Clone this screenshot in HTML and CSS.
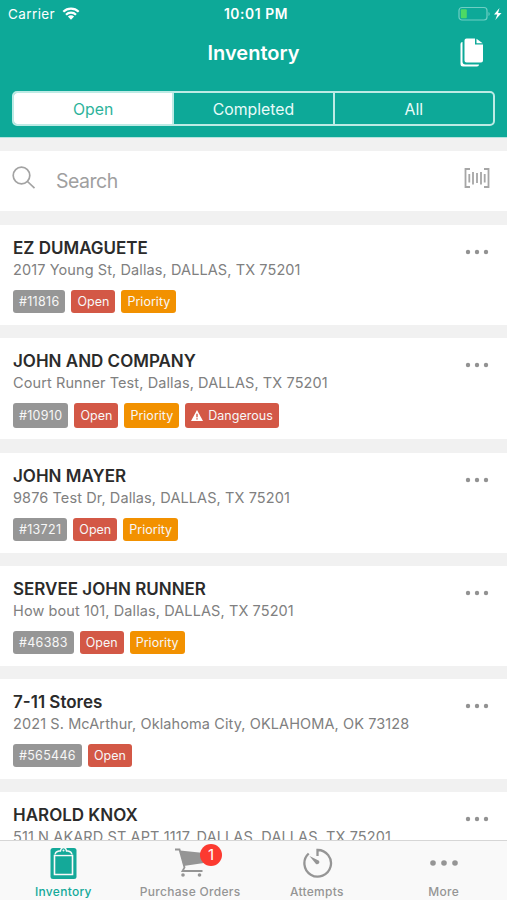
FILE: index.html
```html
<!DOCTYPE html>
<html lang="en">
<head>
    <meta charset="UTF-8">
    <meta name="viewport" content="width=device-width, initial-scale=1.0">
    <title>Inventory</title>
    <link rel="stylesheet" href="styles.css">
</head>
<body>
    <svg class="sprite" aria-hidden="true">
        <symbol id="dots" viewBox="0 0 24 6">
            <circle cx="3" cy="3" r="2.2"/>
            <circle cx="12" cy="3" r="2.2"/>
            <circle cx="21" cy="3" r="2.2"/>
        </symbol>
    </svg>

    <header>
        <div class="status-bar">
            <div class="carrier">
                <span>Carrier</span>
                <svg class="wifi" viewBox="0 0 18 13">
                    <path d="M1.3 4.8a11 11 0 0 1 15.4 0M4 7.8a7 7 0 0 1 10 0"/>
                    <path class="fill" d="M5.9 9.6a4.5 4.5 0 0 1 6.2 0L9 12.8z"/>
                </svg>
            </div>
            <span class="time">10:01 PM</span>
            <div class="battery">
                <svg viewBox="0 0 44 16">
                    <rect class="shell" x="1" y="1.5" width="28" height="12.5" rx="3"/>
                    <path class="tip" d="M30.5 6v4c1.6-.7 1.6-3.3 0-4z"/>
                    <rect class="level" x="2.8" y="3.3" width="6" height="9" rx="1"/>
                    <path class="bolt" d="M41.5 2L36 8.5h3.3L37.3 14 43.5 7h-3.4z"/>
                </svg>
            </div>
        </div>
        <div class="nav-bar">
            <h1>Inventory</h1>
            <svg class="copy-icon" viewBox="0 0 24 30">
                <path d="M.5 6Q.5 4 2.5 4v19.500q0 3 3 3H19q0 2-2 2H3q-2.500 0-2.500-2.500z"/>
                <path d="M6.5.5H15V6.500h8V22.500q0 2-2 2H6.500q-2 0-2-2v-20q0-2 2-2zM16.5.8L22.7 5.200H16.500z"/>
            </svg>
        </div>
        <div class="segments">
            <button class="segment active" type="button">Open</button>
            <button class="segment" type="button">Completed</button>
            <button class="segment" type="button">All</button>
        </div>
    </header>

    <div class="search">
        <svg class="search-icon" viewBox="0 0 24 24">
            <circle cx="9.5" cy="9.5" r="8.3"/>
            <path d="M15.5 15.5l7 6.7"/>
        </svg>
        <input type="text" placeholder="Search">
        <svg class="barcode-icon" viewBox="0 0 26 20">
            <path d="M6 1H1.5v18H6M20 1h4.500v18H20"/>
            <path class="bars" d="M5.3 6v8.500M9 4v12.500M13 5v10M17 4v12.500M20.7 6v8.500"/>
        </svg>
    </div>

    <main class="list">
        <div class="card">
            <div class="info">
                <h2>EZ DUMAGUETE</h2>
                <p>2017 Young St, Dallas, DALLAS, TX 75201</p>
                <div class="tags">
                    <span class="tag number">#11816</span>
                    <span class="tag red">Open</span>
                    <span class="tag orange">Priority</span>
                </div>
            </div>
            <svg class="more"><use href="#dots"/></svg>
        </div>

        <div class="card tall">
            <div class="info">
                <h2>JOHN AND COMPANY</h2>
                <p>Court Runner Test, Dallas, DALLAS, TX 75201</p>
                <div class="tags">
                    <span class="tag number">#10910</span>
                    <span class="tag red">Open</span>
                    <span class="tag orange">Priority</span>
                    <span class="tag red">
                        <svg class="warning" viewBox="0 0 12 11">
                            <path d="M6 0l6 11H0z"/>
                            <path class="mark" d="M6 3.8v3.4M6 8.2v1.3"/>
                        </svg>
                        Dangerous
                    </span>
                </div>
            </div>
            <svg class="more"><use href="#dots"/></svg>
        </div>

        <div class="card">
            <div class="info">
                <h2>JOHN MAYER</h2>
                <p>9876 Test Dr, Dallas, DALLAS, TX 75201</p>
                <div class="tags">
                    <span class="tag number">#13721</span>
                    <span class="tag red">Open</span>
                    <span class="tag orange">Priority</span>
                </div>
            </div>
            <svg class="more"><use href="#dots"/></svg>
        </div>

        <div class="card">
            <div class="info">
                <h2>SERVEE JOHN RUNNER</h2>
                <p>How bout 101, Dallas, DALLAS, TX 75201</p>
                <div class="tags">
                    <span class="tag number">#46383</span>
                    <span class="tag red">Open</span>
                    <span class="tag orange">Priority</span>
                </div>
            </div>
            <svg class="more"><use href="#dots"/></svg>
        </div>

        <div class="card">
            <div class="info">
                <h2>7-11 Stores</h2>
                <p>2021 S. McArthur, Oklahoma City, OKLAHOMA, OK 73128</p>
                <div class="tags">
                    <span class="tag number">#565446</span>
                    <span class="tag red">Open</span>
                </div>
            </div>
            <svg class="more"><use href="#dots"/></svg>
        </div>

        <div class="card">
            <div class="info">
                <h2>HAROLD KNOX</h2>
                <p>511 N AKARD ST APT 1117, DALLAS, DALLAS, TX 75201</p>
            </div>
            <svg class="more"><use href="#dots"/></svg>
        </div>
    </main>

    <nav class="tab-bar">
        <a class="tab active">
            <svg class="tab-icon" viewBox="0 0 32 34">
                <rect x="3.5" y="2" width="26" height="31" rx="2.5"/>
                <path class="cut" d="M7.5 9.500h18v19h-18z"/>
                <path class="clip" d="M8 8.500q.5-3 4-3.500h1.500q.5-3.500 3-3.500t3 3.500H21q3.500.5 4 3.500"/>
                <circle class="hole" cx="16.5" cy="4.500" r="1"/>
            </svg>
            <span>Inventory</span>
        </a>
        <a class="tab">
            <div class="icon-wrap">
                <svg class="tab-icon" viewBox="0 0 32 34">
                    <path d="M6 4.500L30 7V17L9.500 20z"/>
                    <path class="line" d="M1 3.500h4.500L10.500 21.500l-2 3.500h20"/>
                    <circle cx="9" cy="29" r="1.8"/>
                    <circle cx="25.500" cy="29" r="1.8"/>
                </svg>
                <span class="badge">1</span>
            </div>
            <span>Purchase Orders</span>
        </a>
        <a class="tab">
            <svg class="tab-icon" viewBox="0 0 32 34">
                <path class="ring" d="M16.5 10V4A13.3 13.3 0 1 1 7.7 7.5"/>
                <path d="M8.500 10l9.500 4.700a2.3 2.3 0 0 1-3 3.300z"/>
            </svg>
            <span>Attempts</span>
        </a>
        <a class="tab">
            <svg class="tab-icon" viewBox="0 0 32 34">
                <circle cx="5" cy="17" r="2.8"/>
                <circle cx="16" cy="17" r="2.8"/>
                <circle cx="27" cy="17" r="2.8"/>
            </svg>
            <span>More</span>
        </a>
    </nav>
</body>
</html>
```
FILE: styles.css
```css
* {
    box-sizing: border-box;
}

body {
    margin: 0;
    height: 100vh;
    display: flex;
    flex-direction: column;
    overflow: hidden;
    font-family: Inter, "Liberation Sans", sans-serif;
    background: #f1f1f1;
    color: #2b2b2b;
}

.sprite {
    display: none;
}

header {
    flex: none;
    height: 138px;
    background: #0da998;
    color: #fff;
    border-bottom: 1px solid #b5e3de;
}

.status-bar {
    display: grid;
    grid-template-columns: 1fr auto 1fr;
    align-items: center;
    height: 28px;
    padding: 0 5px 0 8px;
    font-size: 13.5px;
}

.carrier {
    display: flex;
    align-items: center;
    gap: 7px;
    letter-spacing: 0.4px;
}

.wifi {
    width: 18px;
    height: 13px;
    margin-bottom: 2px;
    fill: none;
    stroke: #fff;
    stroke-width: 2.2;
}

.wifi .fill {
    fill: #fff;
    stroke: none;
}

.time {
    padding-left: 2px;
    font-weight: 600;
    font-size: 13.8px;
    letter-spacing: 0.6px;
}

.battery {
    display: flex;
    justify-content: flex-end;
    margin-bottom: 1px;
}

.battery svg {
    width: 44px;
    height: 16px;
    fill: #fff;
}

.battery .shell {
    fill: none;
    stroke: #6fcfc4;
    stroke-width: 1.2;
}

.battery .tip {
    fill: #6fcfc4;
}

.battery .level {
    fill: #4cd964;
}

.nav-bar {
    display: grid;
    grid-template-columns: 1fr auto 1fr;
    align-items: center;
    height: 49px;
    padding: 0 23px;
}

.nav-bar h1 {
    grid-column: 2;
    margin: 0;
    font-size: 20px;
    font-weight: 600;
}

.copy-icon {
    justify-self: end;
    width: 24px;
    height: 30px;
    fill: #fff;
}

.segments {
    display: flex;
    height: 35px;
    margin: 14px 12px 0 12px;
    border: 2px solid #bdebe5;
    border-radius: 5px;
    background: #0da998;
}

.segment {
    flex: 1;
    padding: 1px 0 0;
    border: none;
    border-left: 2px solid #bdebe5;
    background: none;
    color: #e9fbf8;
    font-family: inherit;
    font-size: 15.8px;
}

.segment:first-child {
    border-left: none;
    border-radius: 3px 0 0 3px;
}

.segment.active {
    background: #fff;
    color: #2db39b;
}

.search {
    flex: none;
    display: flex;
    align-items: center;
    height: 60px;
    margin: 13px 0 14px;
    padding: 0 17px 0 12px;
    background: #fff;
}

.search-icon {
    width: 24px;
    height: 24px;
    margin-bottom: 6px;
    fill: none;
    stroke: #a3a3a3;
    stroke-width: 1.7;
}

.search input {
    flex: 1;
    min-width: 0;
    margin-left: 20px;
    padding: 0;
    border: none;
    outline: none;
    font-family: inherit;
    font-size: 19.5px;
    letter-spacing: -0.5px;
}

.search input::placeholder {
    color: #a0a0a0;
}

.barcode-icon {
    width: 26px;
    height: 20px;
    margin-bottom: 6px;
    fill: none;
    stroke: #a6a6a6;
    stroke-width: 1.8;
}

.list {
    flex: 1;
    min-height: 0;
    overflow: hidden;
    display: flex;
    flex-direction: column;
    gap: 13px;
}

.card {
    flex: none;
    display: flex;
    justify-content: space-between;
    height: 100px;
    padding: 12px 18px 0 13px;
    background: #fff;
}

.card.tall {
    height: 101px;
    margin-bottom: 1px;
}

.card h2 {
    margin: 0;
    font-size: 17px;
    font-weight: 600;
    line-height: 22px;
}

.card p {
    margin: 0;
    color: #808080;
    font-size: 14.5px;
    line-height: 22px;
    letter-spacing: 0.1px;
}

.tags {
    display: flex;
    gap: 6px;
    margin-top: 9px;
}

.tag {
    display: flex;
    align-items: center;
    gap: 5px;
    height: 23px;
    padding: 0 6px;
    border-radius: 3px;
    background: #969696;
    color: #f7f7f7;
    font-size: 12.5px;
    letter-spacing: 0.02px;
}

.tag.number {
    letter-spacing: 0.3px;
}

.tall .tag {
    height: 25px;
}

.tag.red {
    background: #d35846;
}

.tag.orange {
    background: #f29100;
}

.warning {
    width: 12px;
    height: 11px;
    fill: #fff;
}

.warning .mark {
    stroke: #d35846;
    stroke-width: 1.4;
}

.more {
    width: 24px;
    height: 6px;
    margin-top: 12px;
    fill: #929292;
}

.tab-bar {
    flex: none;
    display: grid;
    grid-template-columns: repeat(4, 1fr);
    height: 60px;
    border-top: 1px solid #d6d6d6;
    background: #f9f9f9;
}

.tab {
    display: flex;
    flex-direction: column;
    align-items: center;
    padding-top: 5px;
    color: #959595;
    font-size: 12px;
    font-weight: 500;
    line-height: 24px;
    letter-spacing: 0.3px;
}

.tab.active {
    color: #14a999;
}

.tab-icon {
    display: block;
    width: 32px;
    height: 34px;
    fill: currentColor;
}

.tab-icon .cut {
    fill: none;
    stroke: #f9f9f9;
    stroke-width: 1.6;
}

.tab-icon .clip {
    fill: currentColor;
    stroke: #f9f9f9;
    stroke-width: 1.3;
}

.tab-icon .hole {
    fill: #f9f9f9;
}

.tab-icon .line {
    fill: none;
    stroke: currentColor;
    stroke-width: 1.8;
}

.tab-icon .ring {
    fill: none;
    stroke: currentColor;
    stroke-width: 2.3;
}

.icon-wrap {
    position: relative;
}

.badge {
    position: absolute;
    top: -2px;
    left: 26px;
    width: 22px;
    height: 22px;
    border-radius: 50%;
    background: #fc3a30;
    color: #fff;
    font-size: 15px;
    font-weight: 400;
    line-height: 22px;
    text-align: center;
}
```
